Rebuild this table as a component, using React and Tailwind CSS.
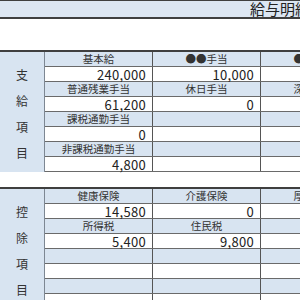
import React from 'react'

const jp = "font-['Noto_Sans_CJK_JP','Noto_Sans',sans-serif]"

const payRows = [
  { label: true, cells: ['基本給', '●●手当', '●●手当'] },
  { label: false, cells: ['240,000', '10,000', '0'] },
  { label: true, cells: ['普通残業手当', '休日手当', '深夜手当'] },
  { label: false, cells: ['61,200', '0', '0'] },
  { label: true, cells: ['課税通勤手当', '', ''] },
  { label: false, cells: ['0', '', ''] },
  { label: true, cells: ['非課税通勤手当', '', ''] },
  { label: false, cells: ['4,800', '', ''] },
]

const deductRows = [
  { label: true, cells: ['健康保険', '介護保険', '厚生年金'] },
  { label: false, cells: ['14,580', '0', '22,875'] },
  { label: true, cells: ['所得税', '住民税', ''] },
  { label: false, cells: ['5,400', '9,800', ''] },
  { label: true, cells: ['', '', ''] },
  { label: false, cells: ['', '', ''] },
  { label: true, cells: ['', '', ''] },
  { label: false, cells: ['', '', ''] },
]

const Section = ({ side, rows }) => (
  <div className="flex border-t-2 border-[#3f3f3f]">
    <div className="flex w-[45px] shrink-0 flex-col items-center justify-center gap-[14px] border-r border-[#7d8793] bg-[#d8e4f1] pt-[4px] text-[12px] leading-[12px] text-[#333]">
      {side.split('').map((c) => (
        <span key={c}>{c}</span>
      ))}
    </div>
    <div className="flex flex-col">
      {rows.map((row, i) => (
        <div
          key={i}
          className={`flex h-[15px] border-b border-[#6a6a6a] ${row.label ? 'bg-[#d8e4f1]' : 'bg-white'}`}
        >
          {row.cells.map((c, j) => (
            <div
              key={j}
              className={
                row.label
                  ? 'flex w-[108px] shrink-0 items-center justify-center border-r border-[#555] text-[10.5px] leading-none text-[#333]'
                  : 'flex w-[108px] shrink-0 items-center justify-end border-r border-[#555] pr-[6px] text-[13px] leading-none tracking-[0.3px] text-[#222]'
              }
            >
              {c}
            </div>
          ))}
        </div>
      ))}
    </div>
  </div>
)

const App = () => {
  return (
    <div className={`h-[300px] w-[300px] overflow-hidden bg-white ${jp}`}>
      <div className="h-[19px] overflow-hidden whitespace-nowrap border-t border-b-2 border-[#3f3f3f] bg-[#dce6f2] pl-[250px] text-[15px] leading-[16px] text-[#222]">
        給与明細書
      </div>
      <div className="mt-[31px]">
        <Section side="支給項目" rows={payRows} />
      </div>
      <div className="mt-[15px]">
        <Section side="控除項目" rows={deductRows} />
      </div>
    </div>
  )
}

export default App
